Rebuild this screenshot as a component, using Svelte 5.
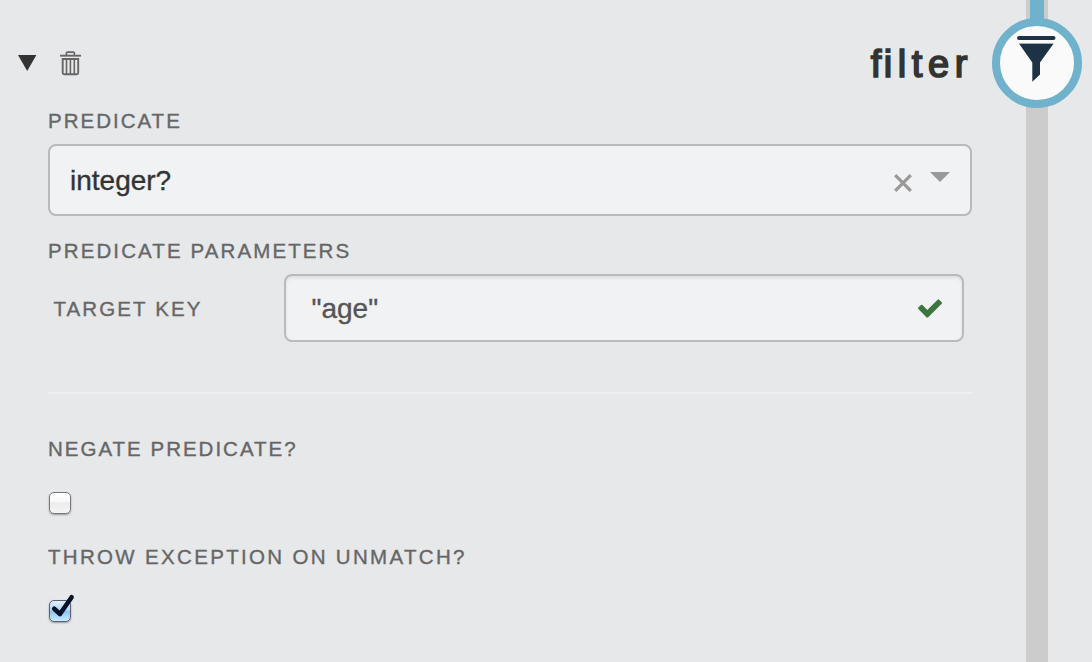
<script>
  let predicate = $state('integer?');
  let targetKey = $state('"age"');
  let negate = $state(false);
  let throwOnUnmatch = $state(true);
</script>

{#snippet checkbox(checked, toggle, label)}
  <button class="check" class:on={checked} role="checkbox" aria-checked={checked} aria-label={label} onclick={toggle}>
    {#if checked}
      <svg class="tick" width="30" height="30" viewBox="0 0 30 30">
        <path d="M8.2 16.8L14 22L25.6 5.2" fill="none" stroke="#03142c" stroke-width="4.6" stroke-linecap="round" stroke-linejoin="round" />
      </svg>
    {/if}
  </button>
{/snippet}

<div class="page">
  <main class="panel">
    <header>
      <div class="tools">
        <svg width="18" height="16" viewBox="0 0 18 16"><path d="M0 0H18.4L9.2 16Z" fill="#333" /></svg>
        <svg class="trash" width="21" height="25" viewBox="0 0 21 25" fill="none" stroke="#666">
          <path d="M0 4.7H21" stroke-width="1.9" />
          <path d="M6.4 4.5V2.3Q6.4 1.1 7.6 1.1H13.2Q14.4 1.1 14.4 2.3V4.5" stroke-width="1.7" />
          <path d="M2.7 8H18.2V21.7Q18.2 23.2 16.7 23.2H4.2Q2.7 23.2 2.7 21.7Z" stroke-width="1.9" />
          <path d="M6.5 8V23M10.4 8V23M14.3 8V23" stroke-width="1.6" />
        </svg>
      </div>
      <h1><span>f</span>ilter</h1>
    </header>

    <div class="label l1">PREDICATE</div>
    <div class="select">
      <span>{predicate}</span>
      <svg class="clear" width="18" height="18" viewBox="0 0 18 18"><path d="M1.2 1.2L16.8 16.8M16.8 1.2L1.2 16.8" stroke="#999" stroke-width="3.2" /></svg>
      <svg class="arrow" width="20" height="10" viewBox="0 0 20 10"><path d="M0 0H20L10 10Z" fill="#999" /></svg>
    </div>

    <div class="label l2">PREDICATE PARAMETERS</div>
    <div class="param">
      <div class="label">TARGET KEY</div>
      <div class="input">
        <span>{targetKey}</span>
        <svg width="24" height="19" viewBox="0 0 24 19"><path d="M0.4 8.5Q-.2 9.2.4 10L8.4 18.2Q9.3 19 10.2 18.2L23.7 4.8Q24.3 4 23.7 3.2L21.2.7Q20.4 0 19.6.7L9.3 10.9L4.5 6.1Q3.7 5.4 2.9 6.1Z" fill="#3c763d" /></svg>
      </div>
    </div>

    <hr />

    <div class="label l3">NEGATE PREDICATE?</div>
    {@render checkbox(negate, () => (negate = !negate), 'Negate predicate')}
    <div class="label l4">THROW EXCEPTION ON UNMATCH?</div>
    {@render checkbox(throwOnUnmatch, () => (throwOnUnmatch = !throwOnUnmatch), 'Throw exception on unmatch')}
  </main>

  <aside class="rail">
    <div class="track"><div class="flow"></div></div>
    <div class="node">
      <svg width="74" height="74" viewBox="0 0 74 74">
        <rect x="17" y="10" width="38.5" height="4" rx="2" fill="#1d3345" />
        <path d="M19 17.5H53.5" stroke="#a4adb4" stroke-width="1" />
        <path d="M19.3 18H53.3L40 36.5V48.5L32.3 55.8V36.5Z" fill="#1d3345" />
      </svg>
    </div>
  </aside>
</div>

<style>
  :global(body) {
    background: #e6e8ea;
  }

  .page {
    display: grid;
    grid-template-columns: 992px 100px;
    height: 662px;
    overflow: hidden;
    background: #e6e8ea;
    font-family: 'Liberation Sans', Arial, sans-serif;
  }

  .panel {
    display: flex;
    flex-direction: column;
    box-sizing: border-box;
    padding: 36px 20px 0 48px;
  }

  header {
    display: flex;
    justify-content: space-between;
    align-items: center;
    height: 56px;
    margin-left: -30px;
  }

  .tools {
    display: flex;
    align-items: center;
    gap: 24px;
    height: 24px;
    padding-bottom: 2px;
  }

  .tools svg {
    overflow: visible;
  }

  h1 {
    margin: 0;
    font-size: 38px;
    line-height: 56px;
    font-weight: 400;
    letter-spacing: 5.6px;
    margin-right: -1px;
    color: #333;
    -webkit-text-stroke: 1.7px #333;
  }

  h1 span {
    letter-spacing: 2.4px;
  }

  .label {
    font-size: 20.5px;
    line-height: 24px;
    letter-spacing: 2px;
    color: #666;
    white-space: nowrap;
    -webkit-text-stroke: 0.35px #666;
  }

  .l1 {
    margin: 17px 0 11px;
  }

  .l2 {
    margin: 23px 0 11px;
    letter-spacing: 2.1px;
  }

  .l3 {
    margin: 43px 0 31px;
  }

  .l4 {
    margin: 31px 0 31px;
    letter-spacing: 2.32px;
  }

  .select,
  .input {
    display: flex;
    align-items: center;
    box-sizing: border-box;
    border: 2px solid #b8babc;
    border-radius: 8px;
    background: #f0f2f4;
    font-size: 28px;
    line-height: 34px;
  }

  .select {
    height: 72px;
    padding: 0 20px;
    color: #333;
    -webkit-text-stroke: 0.35px #333;
  }

  .select span,
  .input span {
    flex: 1;
    padding-top: 2px;
  }

  .clear {
    margin: 5px 18px 0 0;
  }

  .arrow {
    margin-bottom: 7px;
  }

  .param {
    display: grid;
    grid-template-columns: 230.5px 680px;
    align-items: center;
    padding-left: 5.5px;
  }

  .param .label {
    padding-top: 1px;
    letter-spacing: 2.1px;
  }

  .input {
    height: 68px;
    padding: 0 20px 0 25.5px;
    color: #555;
    -webkit-text-stroke: 0.35px #555;
    box-shadow: inset 0 2px 3px rgba(0, 0, 0, 0.09);
  }

  hr {
    width: 100%;
    height: 2px;
    margin: 50px 0 0;
    border: 0;
    background: #eff0f2;
  }

  .check {
    display: block;
    position: relative;
    box-sizing: border-box;
    width: 22px;
    height: 22px;
    margin-left: 1px;
    padding: 0;
    border: 1px solid #77777a;
    border-radius: 5px;
    background: linear-gradient(#fff 0%, #f8f8f8 45%, #ececec 50%, #f4f4f4 100%);
    box-shadow: 0 1px 2px rgba(0, 0, 0, 0.35);
  }

  .check.on {
    border-color: #5d6078;
    background: linear-gradient(#e2effb 0%, #b5d8f5 45%, #8fc4f0 52%, #c8ecff 100%);
  }

  .tick {
    position: absolute;
    left: -4px;
    top: -9px;
  }

  .rail {
    position: relative;
  }

  .track {
    width: 22px;
    height: 100%;
    margin-left: 34px;
    background: #ccc;
  }

  .flow {
    width: 14px;
    height: 30px;
    margin: 0 auto;
    background: #70b2cc;
  }

  .node {
    position: absolute;
    left: 0;
    top: 18px;
    width: 74px;
    height: 74px;
    border: 8px solid #70b2cc;
    border-radius: 50%;
    background: #fafafa;
  }

  .node svg {
    display: block;
  }
</style>
